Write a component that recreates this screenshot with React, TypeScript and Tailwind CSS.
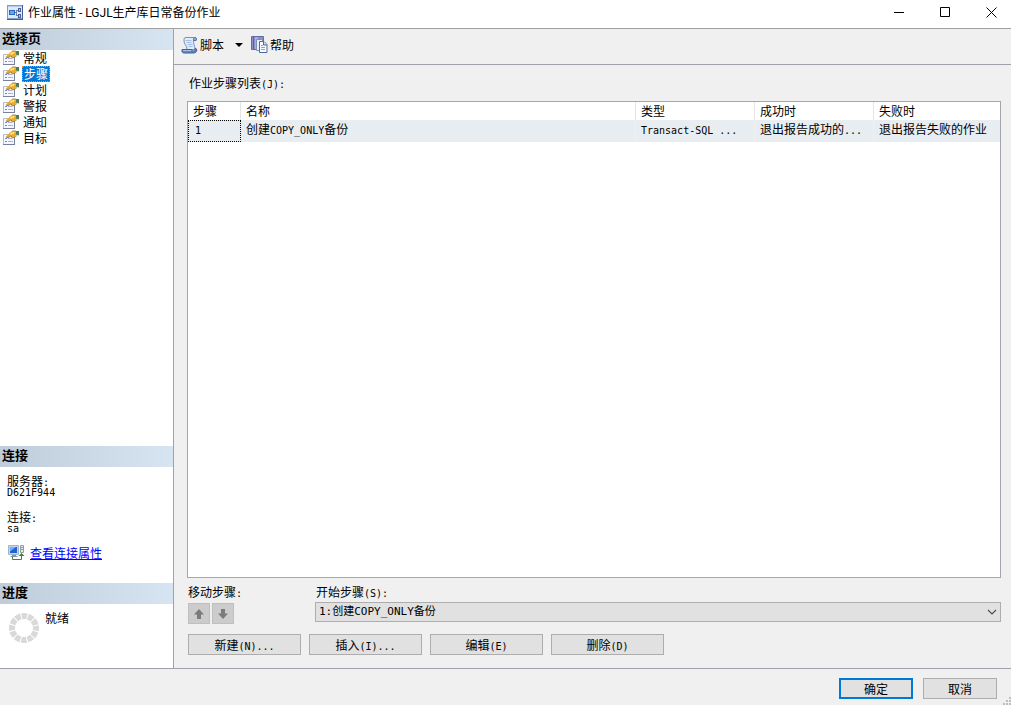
import React from "react";

const PAGES = ["常规", "步骤", "计划", "警报", "通知", "目标"];

/** Sets Latin runs in a half-width face so they take half of a CJK cell. */
function Mixed({ text }: { text: string }) {
  const runs = text.match(/[\x20-\x7e]+|[^\x20-\x7e]+/g) ?? [];
  return (
    <>
      {runs.map((run, i) =>
        /^[\x20-\x7e]/.test(run) ? (
          <span key={i} className="font-['DejaVu_Sans_Mono','Liberation_Mono',monospace] text-[10px] leading-none">
            {run}
          </span>
        ) : (
          run
        ),
      )}
    </>
  );
}

function AppIcon() {
  return (
    <svg width="16" height="15" viewBox="0 0 16 15" shapeRendering="crispEdges" aria-hidden="true">
      <rect width="16" height="15" fill="#3f5f96" />
      <rect x="0" y="0" width="15" height="14" fill="#7f9cc8" />
      <rect x="1" y="1" width="14" height="12" fill="#dde8f8" />
      <rect x="1" y="1" width="14" height="1" fill="#b5cbea" />
      <rect x="2" y="5" width="6" height="5" fill="#2c66c4" />
      <rect x="3" y="6" width="4" height="3" fill="#5fa8f2" />
      <path d="M8 7h2v1H8zM9 5h2v1H9zM9 10h2v1H9zM9 5h1v6H9z" fill="#6c80aa" />
      <rect x="11" y="3" width="3" height="4" fill="#4c5f9c" />
      <rect x="12" y="4" width="1" height="2" fill="#a9c6ef" />
      <rect x="11" y="9" width="3" height="4" fill="#4c5f9c" />
      <rect x="12" y="10" width="1" height="2" fill="#a9c6ef" />
    </svg>
  );
}

function PageIcon() {
  return (
    <svg width="16" height="16" viewBox="0 0 16 16" aria-hidden="true">
      <path d="M.5 4.500h11v10H.5z" fill="#f4f7fe" stroke="#b4bccb" />
      <path d="M0 14.500h12M11.500 14V8" fill="none" stroke="#75829e" />
      <path d="M2 8.500h2M2 11.500h2" stroke="#7484d6" />
      <path d="M5 8.500h4M5 11.500h5" stroke="#a3b1e6" />
      <path d="M3 6.500 7 2.500 9 1h4.500l.5 3.500L11.500 7 9 7.500 8 5.500 5 7.500z" fill="#e9ab2e" />
      <path d="M3 7 5 7.700 8 5.800 9.300 8l2.700-.7 2-2" fill="none" stroke="#98701f" strokeWidth=".9" />
      <path d="M7 3.500 9.500 2H12l-1.500 2-3 .7z" fill="#ffe27a" />
      <path d="M9 1h4" stroke="#a98634" strokeWidth=".8" />
      <path d="M13 1h3v4.500l-3-1z" fill="#4c7d56" />
    </svg>
  );
}

function ScriptIcon() {
  return (
    <svg width="18" height="18" viewBox="0 0 18 18" aria-hidden="true">
      <path d="M4 1.500h9.500c2 0 2.500 1.500 1.500 3h-2.500c-.5 3 1.500 5 1.500 9H6c0-4-3-5-3-8.500 0-1.500 0-3 1-3.500z" fill="#dfeafa" stroke="#7891bd" />
      <path d="M12.500 4.500c-.3-1.500.2-2.500 1-3 2 0 2.500 1.500 1.500 3z" fill="#8ca8d6" stroke="#5672a5" />
      <path d="M4.500 4.500h6M5.500 6.500h5M6.500 8.500h5M7.500 10.500h4" stroke="#a6bee5" />
      <path d="M1 13.500h9.500c.5 1 1.500 1.500 2.500 1.500s1.500-1 1-2.500c2 0 2 1 1.500 2.500s-1.500 2-3 2H3c-1.500 0-2.500-1.500-2-3z" fill="#6886bd" stroke="#405f98" />
      <path d="M2 14.500h8" stroke="#a9c0e6" />
    </svg>
  );
}

function HelpIcon() {
  return (
    <svg width="17" height="17" viewBox="0 0 17 17" aria-hidden="true">
      <path d="M.5.500h12v13H.5z" fill="#8c90c6" stroke="#646aa6" />
      <path d="M2.500 1v12" stroke="#5c629f" />
      <path d="M4 1h3v12H4z" fill="#a9aedb" />
      <path d="M5.500 3.500h5l2 2v9h-7z" fill="#e9effa" stroke="#7b91b9" />
      <path d="M8.500 5.500h4.500l3 3v8H8.500z" fill="#f7faff" stroke="#4f6c9f" />
      <path d="M12.500 5.500V9H16" fill="#c9d8f0" stroke="#4f6c9f" />
      <path d="M10 9.500h2M10 11.500h4M10 13.500h4" stroke="#8aa4d0" />
    </svg>
  );
}

function ConnectionIcon() {
  return (
    <svg width="17" height="16" viewBox="0 0 17 16" aria-hidden="true">
      <path d="M.5.500h10v9H.5z" fill="#c6d4e8" stroke="#a3b3cb" />
      <path d="M2 2h7v6H2z" fill="#1f63d2" />
      <path d="M2 2h6L2 6.500z" fill="#6cb0f7" />
      <path d="M4 10h4v1h1.500v1h-7v-1H4z" fill="#8192ad" />
      <path d="M12.500.500h3v7h-3z" fill="#e6ebf3" stroke="#8f9bb1" />
      <path d="M13 2.500h2M13 4.500h2" stroke="#8f9bb1" />
      <path d="M4.500 12v2.500h9V10" fill="none" stroke="#2c9412" />
      <path d="M10.500 11 13.500 8l3 3z" fill="#2c9412" />
    </svg>
  );
}

function Spinner() {
  return (
    <svg width="30" height="30" viewBox="0 0 30 30" aria-hidden="true">
      <circle cx="15" cy="15" r="12" fill="none" stroke="#d9d9d9" strokeWidth="6" strokeDasharray="5.300 .983" strokeDashoffset="2.650" />
    </svg>
  );
}

function SectionHeader({ children }: { children: React.ReactNode }) {
  return (
    <h2 className="flex h-[21px] shrink-0 items-center bg-linear-to-r from-[#bfcddb] to-[#d7e4f2] px-0.5 pb-1 text-[13px] font-bold">
      {children}
    </h2>
  );
}

function WindowButton({ label, children }: { label: string; children: React.ReactNode }) {
  return (
    <button type="button" aria-label={label} className="flex h-6 w-10 items-center justify-center hover:bg-gray-200">
      <svg width="11" height="11" viewBox="0 0 11 11" fill="none" stroke="#000" aria-hidden="true">
        {children}
      </svg>
    </button>
  );
}

function PushButton({ text }: { text: string }) {
  return (
    <button type="button" className="h-[21px] w-[113px] border border-[#adadad] bg-[#e1e1e1] text-center leading-[17px] whitespace-nowrap">
      <Mixed text={text} />
    </button>
  );
}

function MoveButton({ label, d }: { label: string; d: string }) {
  return (
    <button type="button" disabled aria-label={label} className="flex h-[21px] w-[22px] items-center justify-center border border-[#bfbfbf] bg-[#cccccc]">
      <svg width="12" height="12" viewBox="0 0 12 12" aria-hidden="true">
        <path d={d} fill="#7b7b7b" />
      </svg>
    </button>
  );
}

const HEAD = "border-r border-[#e5e5e5] px-[5px] text-left font-normal last:border-r-0";
const CELL = "truncate border-r border-[#f0f0f0] px-[5px] pb-1 last:border-r-0";

export default function App() {
  return (
    <div className="flex h-screen min-h-[480px] flex-col bg-[#f0f0f0] font-['Noto_Sans_CJK_SC',sans-serif] text-xs leading-4 text-black">
      <header className="flex h-[29px] shrink-0 items-center justify-between border-b border-[#a0a0a0] bg-white pb-[3px] pl-[7px]">
        <div className="flex items-center gap-[5px]">
          <AppIcon />
          <h1 className="font-[Roboto,'Noto_Sans_CJK_SC',sans-serif]">作业属性 - LGJL生产库日常备份作业</h1>
        </div>
        <div className="flex gap-1.5">
          <WindowButton label="最小化">
            <path d="M0 5.500h10" />
          </WindowButton>
          <WindowButton label="最大化">
            <path d="M.5.500h9v9h-9z" />
          </WindowButton>
          <WindowButton label="关闭">
            <path d="M.5.500l10 10M10.500.500l-10 10" />
          </WindowButton>
        </div>
      </header>

      <div className="flex min-h-0 flex-1">
        <aside className="flex w-[174px] shrink-0 flex-col border-r border-[#a0a0a8] bg-white">
          <SectionHeader>选择页</SectionHeader>
          <nav className="flex-1">
            {PAGES.map((page) => (
              <a key={page} href="#" className="flex h-4 items-center gap-[3px] pl-[3px]">
                <PageIcon />
                <span
                  className={
                    page === "步骤"
                      ? "h-4 border border-dotted border-[#ff8728] bg-[#0078d7] px-px leading-[14px] text-white"
                      : "h-4 px-px"
                  }
                >
                  {page}
                </span>
              </a>
            ))}
          </nav>

          <SectionHeader>连接</SectionHeader>
          <section className="flex h-[116px] shrink-0 flex-col px-[7px] pt-2 leading-3">
            <dl>
              <dt className="h-3"><Mixed text="服务器:" /></dt>
              <dd className="mb-3 flex h-3 items-center"><Mixed text="D621F944" /></dd>
              <dt className="h-3"><Mixed text="连接:" /></dt>
              <dd className="flex h-3 items-center"><Mixed text="sa" /></dd>
            </dl>
            <a href="#" className="mt-2.5 flex items-center gap-[5px] pl-px leading-4 text-[#0000ff] underline">
              <ConnectionIcon />
              查看连接属性
            </a>
          </section>

          <SectionHeader>进度</SectionHeader>
          <section className="flex h-16 shrink-0 items-start gap-1.5 pt-1.5 pl-[9px]">
            <div className="pt-[3px]">
              <Spinner />
            </div>
            <p>就绪</p>
          </section>
        </aside>

        <main className="flex min-w-0 flex-1 flex-col">
          <div className="flex h-9 shrink-0 items-center border-b border-[#a0a0a8] pb-1 pl-[7px]">
            <button type="button" className="flex items-center gap-px">
              <ScriptIcon />
              脚本
            </button>
            <button type="button" aria-label="脚本选项" className="mr-2 ml-[11px]">
              <svg width="8" height="4" viewBox="0 0 8 4" aria-hidden="true">
                <path d="M0 0h8L4 4z" />
              </svg>
            </button>
            <button type="button" className="flex items-center gap-0.5">
              <HelpIcon />
              帮助
            </button>
          </div>

          <div className="flex min-h-0 flex-1 flex-col pt-2.5 pr-2.5 pb-[13px] pl-[13px]">
            <h3 id="steps-label" className="h-4 px-0.5">
              <Mixed text="作业步骤列表(J):" />
            </h3>

            <div className="mt-2.5 min-h-0 flex-1 border border-[#a5a5ad] bg-white">
              <table aria-labelledby="steps-label" className="w-full table-fixed border-separate border-spacing-0">
                <colgroup>
                  <col className="w-[53px]" />
                  <col />
                  <col className="w-[119px]" />
                  <col className="w-[119px]" />
                  <col className="w-[126px]" />
                </colgroup>
                <thead>
                  <tr className="h-[18px]">
                    {["步骤", "名称", "类型", "成功时", "失败时"].map((name) => (
                      <th key={name} scope="col" className={HEAD}>
                        {name}
                      </th>
                    ))}
                  </tr>
                </thead>
                <tbody>
                  <tr className="h-[22px] bg-[#e8edf2]">
                    <td className="border border-dotted border-black px-1.5 pb-1">
                      <Mixed text="1" />
                    </td>
                    <td className={CELL}><Mixed text="创建COPY_ONLY备份" /></td>
                    <td className={CELL}><Mixed text="Transact-SQL ..." /></td>
                    <td className={CELL}><Mixed text="退出报告成功的..." /></td>
                    <td className={CELL}>退出报告失败的作业</td>
                  </tr>
                </tbody>
              </table>
            </div>

            <div className="mt-1.5 flex shrink-0">
              <div className="w-[128px] shrink-0 pl-px">
                <p className="h-4"><Mixed text="移动步骤:" /></p>
                <div className="mt-[3px] flex gap-0.5">
                  <MoveButton label="上移" d="M6 1 11 6.500H8V11H4V6.500H1z" />
                  <MoveButton label="下移" d="M6 11 1 5.500h3V1h4v4.500h3z" />
                </div>
              </div>
              <div className="min-w-0 flex-1">
                <label htmlFor="start-step" className="block h-4 px-px">
                  <Mixed text="开始步骤(S):" />
                </label>
                <div className="relative mt-0.5">
                  <select
                    id="start-step"
                    className="block h-5 w-full appearance-none border border-[#adadad] bg-[#e1e1e1] pl-[3px] font-['DejaVu_Sans_Mono','Noto_Sans_CJK_SC',monospace] text-[11px] leading-4"
                  >
                    <option>1:创建COPY_ONLY备份</option>
                  </select>
                  <svg className="pointer-events-none absolute top-[7px] right-1" width="10" height="7" viewBox="0 0 10 7" aria-hidden="true">
                    <path d="M1 1l4 4 4-4" fill="none" stroke="#505050" strokeWidth="1.200" />
                  </svg>
                </div>
              </div>
            </div>

            <div className="mt-2.5 flex shrink-0 gap-2 pl-px">
              <PushButton text="新建(N)..." />
              <PushButton text="插入(I)..." />
              <PushButton text="编辑(E)" />
              <PushButton text="删除(D)" />
            </div>
          </div>
        </main>
      </div>

      <footer className="relative flex h-[37px] shrink-0 items-start justify-end gap-2.5 border-t border-[#a0a0a8] pt-[9px] pr-3.5">
        <button type="button" className="h-[21px] w-[74px] border-2 border-[#0078d7] bg-[#e1e1e1] leading-[17px]">
          确定
        </button>
        <button type="button" className="h-[21px] w-[74px] border border-[#adadad] bg-[#e1e1e1] leading-[19px]">
          取消
        </button>
        <svg className="absolute right-0 bottom-0" width="8" height="8" viewBox="0 0 8 8" aria-hidden="true">
          <path d="M6 0h2v2H6zM3 3h2v2H3zM6 3h2v2H6zM0 6h2v2H0zM3 6h2v2H3zM6 6h2v2H6z" fill="#bfbfbf" />
        </svg>
      </footer>
    </div>
  );
}
